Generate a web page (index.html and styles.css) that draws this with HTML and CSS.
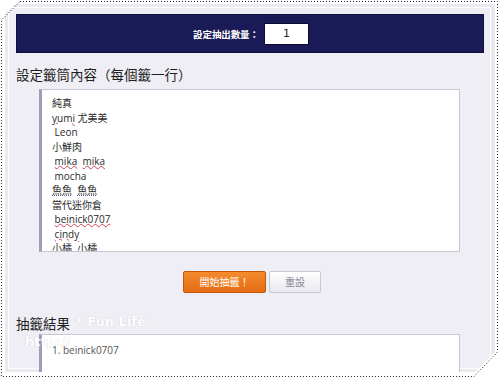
FILE: index.html
```html
<!DOCTYPE html>
<html lang="zh-Hant">
<head>
<meta charset="utf-8">
<title>抽籤</title>
<link rel="stylesheet" href="styles.css">
</head>
<body>
<div class="frame">
  <div class="shot">
    <div class="inner">
      <div class="bar">
        <span class="bar-label">設定抽出數量：</span>
        <span class="count">1</span>
      </div>
      <h2 class="title">設定籤筒內容（每個籤一行）</h2>
      <div class="box list">
        <div class="ln">純真</div>
        <div class="ln"><span class="sp">yumi</span> 尤美美</div>
        <div class="ln"> Leon</div>
        <div class="ln">小鮮肉</div>
        <div class="ln"> <span class="sp">mika</span>  <span class="sp">mika</span></div>
        <div class="ln"> mocha</div>
        <div class="ln"><span class="ime">魚魚</span>  <span class="ime">魚魚</span></div>
        <div class="ln">當代迷你倉</div>
        <div class="ln"> <span class="sp">beinick0707</span></div>
        <div class="ln"> <span class="sp">cindy</span></div>
        <div class="ln">小橘  小橘</div>
      </div>
      <div class="actions">
        <button class="btn btn-go">開始抽籤！</button>
        <button class="btn btn-reset">重設</button>
      </div>
      <h2 class="title result-title">抽籤結果</h2>
      <div class="box result">
        <div class="ln res">1. beinick0707</div>
      </div>
    </div>
  </div>
  <div class="watermark"><span class="wm1">* Fun Life</span><br>http://</div>
  <svg class="dots" width="500" height="377" viewBox="0 0 500 377">
    <polygon points="20,1.5 497.5,1.5 497.5,352 474,376.5 1.5,376.5 1.5,20" fill="none" stroke="#222" stroke-width="1" stroke-dasharray="1 2"/>
  </svg>
</div>
</body>
</html>
```
FILE: styles.css
```css
* { box-sizing: border-box; }
html, body { margin: 0; padding: 0; background: #fff; }
body {
  width: 500px;
  height: 377px;
  overflow: hidden;
  font-family: "Open Sans", "Noto Sans CJK TC", sans-serif;
  color: #222;
}
.frame {
  position: relative;
  width: 500px;
  height: 377px;
  padding-top: 4px;
  padding-left: 5px;
}
.shot {
  width: 490px;
  height: 368px;
  background: #e9e9ef;
  padding: 3px 4px 0 3px;
  overflow: hidden;
  clip-path: polygon(10px 0, 100% 0, 100% calc(100% - 20px), calc(100% - 20px) 100%, 0 100%, 0 10px);
}
.inner {
  height: 362px;
  border: 1px solid #fff;
  background: #eeeef4;
  padding: 0 6px 0 7px;
}
.bar {
  margin-top: 6px;
  height: 39px;
  background: #1a1a56;
  border: 1px solid #0f0f3c;
  display: flex;
  align-items: center;
  justify-content: center;
  gap: 5px;
  padding-left: 2px;
}
.bar-label {
  color: #fff;
  font-family: "Noto Sans CJK TC", sans-serif;
  font-size: 9.5px;
  font-weight: 700;
  letter-spacing: -0.1px;
}
.count {
  width: 45px;
  height: 22px;
  background: #fff;
  border: 1px solid #0c0c30;
  display: flex;
  align-items: center;
  justify-content: center;
  font-family: "DejaVu Sans", sans-serif;
  font-size: 11px;
  color: #1a1a3a;
}
.title {
  margin: 13px 0 0 0;
  font-family: "Noto Sans CJK TC", sans-serif;
  font-weight: 400;
  font-size: 13.5px;
  line-height: 16px;
  color: #1e1e1e;
}
.box {
  margin: 7px 0 0 23px;
  width: 421px;
  background: #fff;
  border: 1px solid #c7c7d2;
  border-left: 3px solid #9d9db6;
  padding: 6px 0 0 10px;
  overflow: hidden;
}
.list { height: 163px; }
.ln {
  white-space: pre;
  font-size: 10px;
  line-height: 14.5px;
  color: #2a2a2a;
}
.sp {
  text-decoration: underline wavy #d2405a;
  text-decoration-thickness: 1px;
  text-underline-offset: 0px;
}
.ime {
  text-decoration: underline dotted #5a5a90;
  text-underline-offset: 1px;
}
.actions {
  margin-top: 19px;
  display: flex;
  justify-content: center;
  gap: 3px;
  padding-left: 4px;
}
.btn {
  height: 22px;
  margin: 0;
  padding: 0;
  border-radius: 2px;
  font-family: "Noto Sans CJK TC", sans-serif;
  font-size: 10px;
  line-height: 20px;
  cursor: pointer;
}
.btn-go {
  width: 83px;
  color: #fff;
  background: linear-gradient(#f58b2e, #e36c12);
  border: 1px solid #c2580c;
}
.btn-reset {
  width: 52px;
  color: #8a8a98;
  background: linear-gradient(#ffffff, #e8e8ee);
  border: 1px solid #c8c8d3;
}
.result-title { margin-top: 22px; }
.result {
  margin-top: 3px;
  height: 50px;
  padding-top: 8px;
}
.res { color: #555; }
.watermark {
  position: absolute;
  left: 25px;
  top: 312px;
  font-family: "DejaVu Sans", sans-serif;
  font-weight: 700;
  font-size: 13px;
  line-height: 20px;
  color: #fff;
  text-shadow: 0 0 1px rgba(110, 110, 130, 0.35);
  white-space: pre;
}
.wm1 { margin-left: 51px; }
.dots {
  position: absolute;
  left: 0;
  top: 0;
}
```
